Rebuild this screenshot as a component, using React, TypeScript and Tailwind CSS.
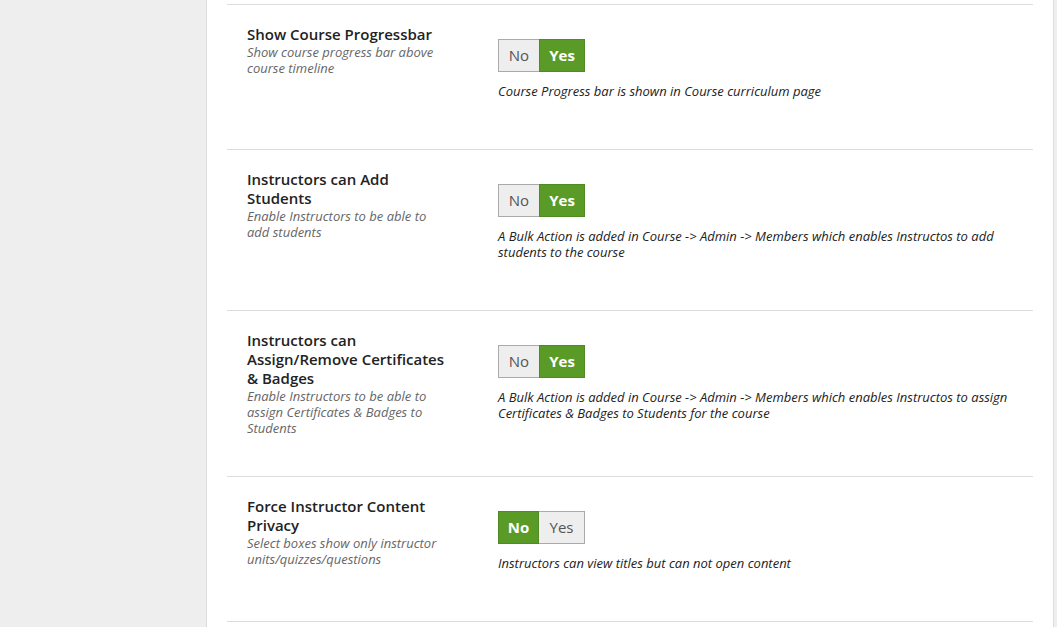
import React from "react";

type Row = {
  title: string;
  desc: string;
  note: string;
  yes: boolean;
};

const rows: Row[] = [
  {
    title: "Show Course Progressbar",
    desc: "Show course progress bar above course timeline",
    note: "Course Progress bar is shown in Course curriculum page",
    yes: true,
  },
  {
    title: "Instructors can Add Students",
    desc: "Enable Instructors to be able to add students",
    note: "A Bulk Action is added in Course -> Admin -> Members which enables Instructos to add students to the course",
    yes: true,
  },
  {
    title: "Instructors can Assign/Remove Certificates & Badges",
    desc: "Enable Instructors to be able to assign Certificates & Badges to Students",
    note: "A Bulk Action is added in Course -> Admin -> Members which enables Instructos to assign Certificates & Badges to Students for the course",
    yes: true,
  },
  {
    title: "Force Instructor Content Privacy",
    desc: "Select boxes show only instructor units/quizzes/questions",
    note: "Instructors can view titles but can not open content",
    yes: false,
  },
];

function Toggle({ yes }: { yes: boolean }) {
  const on = "bg-[#5a9b27] text-white font-bold border-[#4f8a22]";
  const off = "bg-[#eeeeee] text-[#555] font-normal border-[#aaaaaa]";
  return (
    <div className="flex h-[33px] text-[15px]">
      <div
        className={`w-[41px] flex items-center justify-center border ${yes ? off + " border-r-0" : on}`}
      >
        No
      </div>
      <div
        className={`w-[46px] flex items-center justify-center border ${yes ? on : off + " border-l-0"}`}
      >
        Yes
      </div>
    </div>
  );
}

export default function App() {
  return (
    <div
      className="flex w-[1057px] h-[627px] overflow-hidden bg-white"
      style={{ fontFamily: '"Open Sans", "Noto Sans", sans-serif' }}
    >
      <div className="w-[207px] shrink-0 bg-[#eeeeee] border-r border-[#dddddd]" />
      <div className="flex-1 px-[20px]">
        <div className="h-[5px] border-b border-[#dddddd]" />
        {rows.map((r, i) => (
          <div key={i} className="flex border-b border-[#dddddd]">
            <div className="w-[271px] shrink-0 pl-[20px] pt-[20px] pb-[40px]">
              <div className="w-[200px]">
                <div className="text-[15px] leading-[19px] font-semibold text-[#222222]">
                  {r.title}
                </div>
                <div className="text-[13px] leading-[16px] italic text-[#666666]">
                  {r.desc}
                </div>
              </div>
            </div>
            <div className="flex-1 pt-[34px] pb-[50px] pr-[20px]">
              <Toggle yes={r.yes} />
              <div className="mt-[11px] text-[13px] leading-[16px] italic text-[#222222]">
                {r.note}
              </div>
            </div>
          </div>
        ))}
      </div>
      <div className="w-[4px] shrink-0 bg-[#eeeeee] border-l border-[#dddddd]" />
    </div>
  );
}
